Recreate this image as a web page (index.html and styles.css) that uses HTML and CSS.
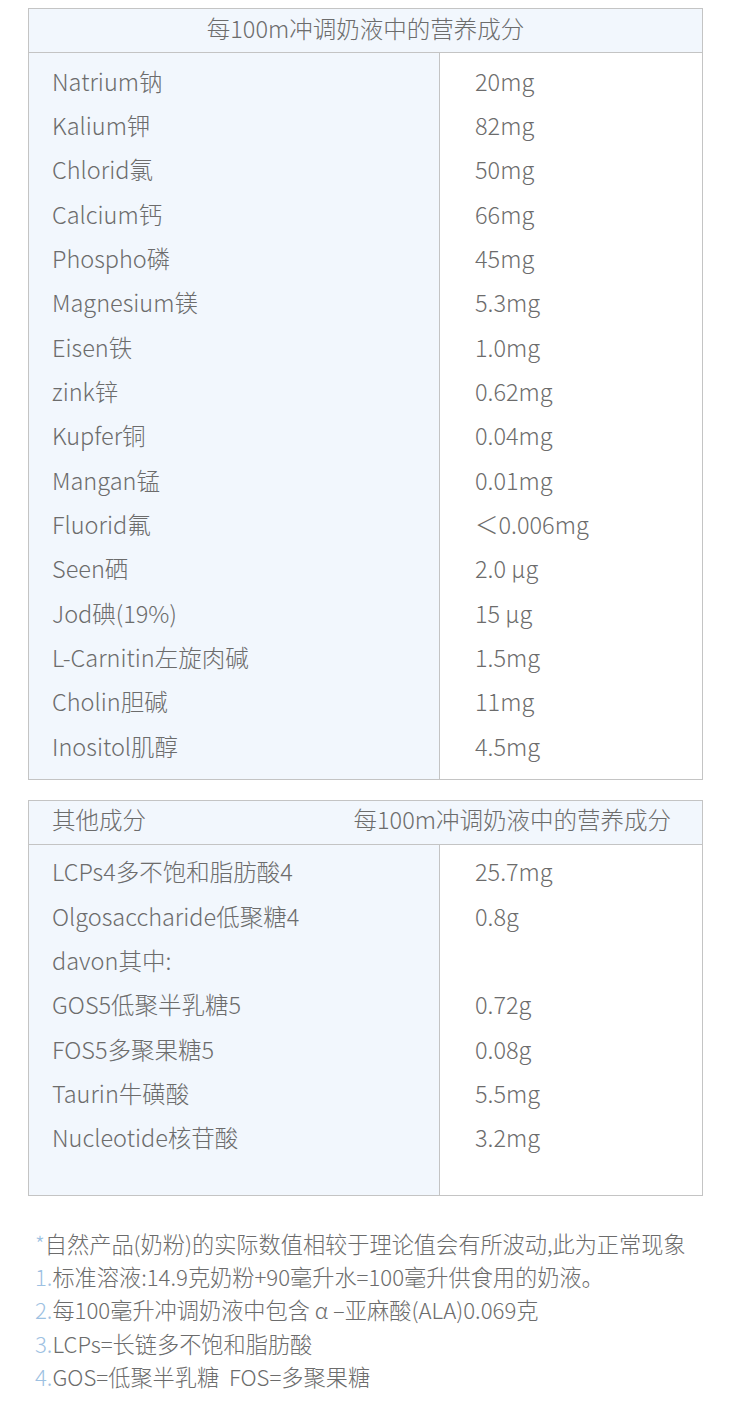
FILE: index.html
```html
<!DOCTYPE html>
<html>
<head>
<meta charset="utf-8">
<link rel="stylesheet" href="styles.css">
</head>
<body>
<div class="page">
  <div class="table">
    <div class="thead center">每100m冲调奶液中的营养成分</div>
    <div class="tbody">
      <div class="col left">
        <div class="cell">Natrium钠</div>
        <div class="cell">Kalium钾</div>
        <div class="cell">Chlorid氯</div>
        <div class="cell">Calcium钙</div>
        <div class="cell">Phospho磷</div>
        <div class="cell">Magnesium镁</div>
        <div class="cell">Eisen铁</div>
        <div class="cell">zink锌</div>
        <div class="cell">Kupfer铜</div>
        <div class="cell">Mangan锰</div>
        <div class="cell">Fluorid氟</div>
        <div class="cell">Seen硒</div>
        <div class="cell">Jod碘(19%)</div>
        <div class="cell">L-Carnitin左旋肉碱</div>
        <div class="cell">Cholin胆碱</div>
        <div class="cell">Inositol肌醇</div>
      </div>
      <div class="col right">
        <div class="cell">20mg</div>
        <div class="cell">82mg</div>
        <div class="cell">50mg</div>
        <div class="cell">66mg</div>
        <div class="cell">45mg</div>
        <div class="cell">5.3mg</div>
        <div class="cell">1.0mg</div>
        <div class="cell">0.62mg</div>
        <div class="cell">0.04mg</div>
        <div class="cell">0.01mg</div>
        <div class="cell">＜0.006mg</div>
        <div class="cell">2.0 μg</div>
        <div class="cell">15 μg</div>
        <div class="cell">1.5mg</div>
        <div class="cell">11mg</div>
        <div class="cell">4.5mg</div>
      </div>
    </div>
  </div>

  <div class="table second">
    <div class="thead split"><span>其他成分</span><span>每100m冲调奶液中的营养成分</span></div>
    <div class="tbody">
      <div class="col left">
        <div class="cell">LCPs4多不饱和脂肪酸4</div>
        <div class="cell">Olgosaccharide低聚糖4</div>
        <div class="cell">davon其中:</div>
        <div class="cell">GOS5低聚半乳糖5</div>
        <div class="cell">FOS5多聚果糖5</div>
        <div class="cell">Taurin牛磺酸</div>
        <div class="cell">Nucleotide核苷酸</div>
      </div>
      <div class="col right">
        <div class="cell">25.7mg</div>
        <div class="cell">0.8g</div>
        <div class="cell"></div>
        <div class="cell">0.72g</div>
        <div class="cell">0.08g</div>
        <div class="cell">5.5mg</div>
        <div class="cell">3.2mg</div>
      </div>
    </div>
  </div>

  <div class="notes">
    <p><span class="mark">*</span>自然产品(奶粉)的实际数值相较于理论值会有所波动,此为正常现象</p>
    <p><span class="mark">1.</span>标准溶液:14.9克奶粉+90毫升水=100毫升供食用的奶液。</p>
    <p><span class="mark">2.</span>每100毫升冲调奶液中包含 α –亚麻酸(ALA)0.069克</p>
    <p><span class="mark">3.</span>LCPs=长链多不饱和脂肪酸</p>
    <p><span class="mark">4.</span>GOS=低聚半乳糖&nbsp;&nbsp;FOS=多聚果糖</p>
  </div>
</div>
</body>
</html>
```

FILE: styles.css
```css
html, body {
  margin: 0;
  padding: 0;
  background: #ffffff;
}
body {
  font-family: "Noto Sans CJK SC", "Noto Sans", sans-serif;
  font-weight: 300;
  color: #6c6c6c;
  font-size: 23.5px;
}
* {
  box-sizing: border-box;
}
.page {
  width: 730px;
  padding-top: 8px;
}
.table {
  margin-left: 28px;
  width: 675px;
  border: 1px solid #c4c4c4;
}
.second {
  margin-top: 20px;
}
.thead {
  height: 44px;
  background: #f2f7fd;
  border-bottom: 1px solid #c4c4c4;
  display: flex;
  align-items: center;
  line-height: 1;
  padding-bottom: 4px;
}
.thead.center {
  justify-content: center;
}
.thead.split {
  justify-content: space-between;
  padding: 0 31px 4px 23px;
}
.tbody {
  display: flex;
}
.col {
  padding: 7px 0 9px;
}
.left {
  width: 411px;
  background: #f2f7fd;
  border-right: 1px solid #c4c4c4;
  padding-left: 23px;
}
.right {
  flex: 1;
  padding-left: 35px;
}
.second .col {
  padding-top: 6px;
  padding-bottom: 34px;
}
.cell {
  height: 44.35px;
  display: flex;
  align-items: center;
  white-space: nowrap;
  padding-bottom: 3px;
}
.notes {
  margin-top: 31px;
  padding-left: 35px;
  font-size: 22.2px;
}
.notes p {
  margin: 0;
  height: 33.25px;
  line-height: 33px;
  white-space: nowrap;
}
.mark {
  color: #9dc1e2;
}
```
